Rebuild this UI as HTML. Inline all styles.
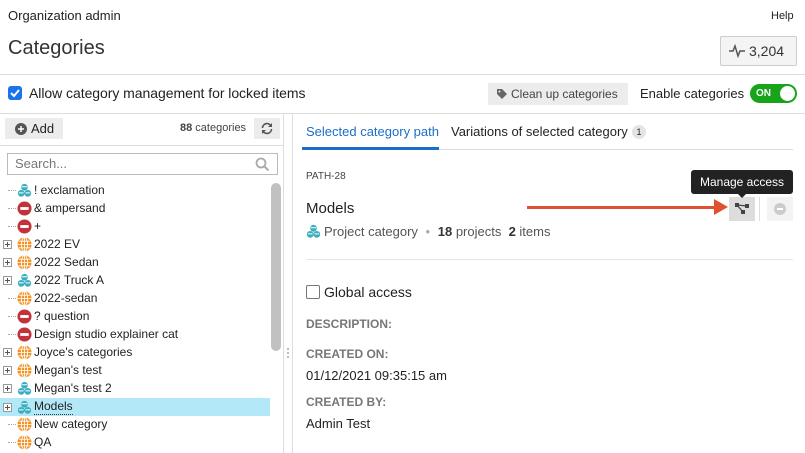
<!DOCTYPE html>
<html><head><meta charset="utf-8"><style>
*{box-sizing:border-box;margin:0;padding:0}
body{width:805px;height:453px;overflow:hidden;background:#fff;font-family:"Liberation Sans",Arial,sans-serif;color:#222;position:relative}
.a{position:absolute;white-space:nowrap}
.hr{position:absolute;height:1px;background:#ddd}
.row{position:absolute;left:0;height:18px;width:270px;font-size:12px;line-height:18px}
.row .t{position:absolute;left:34px;top:0}
.row svg{position:absolute;left:17px;top:2px}
.pl{position:absolute;left:3px;top:5px;width:9px;height:9px;border:1px solid #999;background:#fff}
.pl:before{content:"";position:absolute;left:1px;top:3px;width:5px;height:1px;background:#555}
.pl:after{content:"";position:absolute;left:3px;top:1px;width:1px;height:5px;background:#555}
.dot{position:absolute;left:8px;top:9px;width:8px;border-top:1px dotted #aaa}
.lbl{font-size:12px;font-weight:bold;color:#777}
</style></head><body>
<svg width="0" height="0" style="position:absolute"><defs>
<g id="cube"><circle cx="8" cy="4.5" r="3.6" fill="#3aaebd"/><circle cx="4.5" cy="11" r="3.6" fill="#3aaebd"/><circle cx="11.5" cy="11" r="3.6" fill="#3aaebd"/><path d="M5 4h6M2 10.5h5M9 10.5h5" stroke="#fff" stroke-width="1"/></g>
<g id="globe"><circle cx="8" cy="8" r="7.5" fill="#f39325"/><path d="M8 .5v15M.5 8h15M2 4.5h12M2 11.5h12" stroke="#fff" stroke-width=".9"/><ellipse cx="8" cy="8" rx="3.3" ry="7.5" fill="none" stroke="#fff" stroke-width=".9"/></g>
<g id="no"><circle cx="8" cy="8" r="7.5" fill="#c0333a"/><rect x="3.5" y="6.5" width="9" height="3" fill="#fff"/></g>
</defs></svg>

<div class="a" style="left:8px;top:8px;font-size:13px">Organization admin</div>
<div class="a" style="left:771px;top:10px;font-size:11px">Help</div>
<div class="a" style="left:8px;top:37px;font-size:20px;color:#333">Categories</div>
<div class="a" style="left:720px;top:36px;width:77px;height:30px;border:1px solid #ccc;border-radius:2px;background:#f4f4f4;font-size:14px;line-height:28px;padding-left:28px;color:#333">3,204</div>
<svg class="a" style="left:728px;top:44px" width="18" height="14"><path d="M1 7h4l2-5 3 10 2-5h5" fill="none" stroke="#555" stroke-width="1.5"/></svg>
<div class="hr" style="left:0;top:74px;width:805px"></div>

<div class="a" style="left:8px;top:86px;width:14px;height:14px;background:#1a73e8;border-radius:3px"></div>
<svg class="a" style="left:8px;top:86px" width="14" height="14"><path d="M3 7l3 3 5-6" fill="none" stroke="#fff" stroke-width="2"/></svg>
<div class="a" style="left:29px;top:85px;font-size:14px;letter-spacing:-0.05px">Allow category management for locked items</div>
<div class="a" style="left:488px;top:83px;width:140px;height:22px;background:#ececec;font-size:12px;line-height:22px;padding-left:23px;color:#444">Clean up categories</div>
<svg class="a" style="left:496px;top:88px" width="12" height="12"><path d="M1 1h5l5 5-5 5-5-5z" fill="#666"/><circle cx="3.5" cy="3.5" r="1" fill="#ececec"/></svg>
<div class="a" style="left:640px;top:86px;font-size:13px">Enable categories</div>
<div class="a" style="left:750px;top:84px;width:47px;height:19px;background:#17a31a;border-radius:10px;color:#fff;font-size:10px;font-weight:bold;line-height:19px;padding-left:6px">ON</div>
<div class="a" style="left:780px;top:86px;width:15px;height:15px;background:#fff;border-radius:50%"></div>
<div class="hr" style="left:0;top:113px;width:805px"></div>

<div class="a" style="left:5px;top:118px;width:58px;height:21px;background:#ececec;font-size:13px;line-height:21px;padding-left:26px">Add</div>
<svg class="a" style="left:15px;top:123px" width="12" height="12"><circle cx="6" cy="6" r="6" fill="#555"/><path d="M6 3v6M3 6h6" stroke="#fff" stroke-width="1.5"/></svg>
<div class="a" style="left:180px;top:122px;font-size:11px;color:#444"><b>88</b> categories</div>
<div class="a" style="left:254px;top:118px;width:26px;height:21px;background:#ececec"></div>
<svg class="a" style="left:260px;top:122px" width="14" height="13"><path d="M2.5 6A4.5 4.5 0 0 1 11 4M11.5 7A4.5 4.5 0 0 1 3 9" fill="none" stroke="#555" stroke-width="1.6"/><path d="M12 1v4h-4zM2 12V8h4z" fill="#555"/></svg>
<div class="hr" style="left:0;top:145px;width:283px"></div>
<div class="a" style="left:7px;top:153px;width:271px;height:22px;border:1px solid #bbb;font-size:13px;line-height:20px;padding-left:7px;color:#777">Search...</div>
<svg class="a" style="left:255px;top:157px" width="14" height="14"><circle cx="6" cy="6" r="4.5" fill="none" stroke="#aaa" stroke-width="1.8"/><path d="M9 9l4.5 4.5" stroke="#aaa" stroke-width="2"/></svg>
<div class="a" style="left:271px;top:183px;width:10px;height:168px;background:#c1c1c1;border-radius:5px"></div>
<div class="a" style="left:283px;top:113px;width:1px;height:340px;background:#ddd"></div>
<div class="a" style="left:292px;top:113px;width:1px;height:340px;background:#ddd"></div>
<div class="a" style="left:287px;top:348px;width:2px;height:10px;border-left:2px dotted #bbb"></div>

<div class="row" style="top:181px"><span class="dot"></span><svg width="15" height="15" viewBox="0 0 16 16"><use href="#cube"/></svg><span class="t">! exclamation</span></div>
<div class="row" style="top:199px"><span class="dot"></span><svg width="15" height="15" viewBox="0 0 16 16"><use href="#no"/></svg><span class="t">&amp; ampersand</span></div>
<div class="row" style="top:217px"><span class="dot"></span><svg width="15" height="15" viewBox="0 0 16 16"><use href="#no"/></svg><span class="t">+</span></div>
<div class="row" style="top:235px"><span class="pl"></span><svg width="15" height="15" viewBox="0 0 16 16"><use href="#globe"/></svg><span class="t">2022 EV</span></div>
<div class="row" style="top:253px"><span class="pl"></span><svg width="15" height="15" viewBox="0 0 16 16"><use href="#globe"/></svg><span class="t">2022 Sedan</span></div>
<div class="row" style="top:271px"><span class="pl"></span><svg width="15" height="15" viewBox="0 0 16 16"><use href="#cube"/></svg><span class="t">2022 Truck A</span></div>
<div class="row" style="top:289px"><span class="dot"></span><svg width="15" height="15" viewBox="0 0 16 16"><use href="#globe"/></svg><span class="t">2022-sedan</span></div>
<div class="row" style="top:307px"><span class="dot"></span><svg width="15" height="15" viewBox="0 0 16 16"><use href="#no"/></svg><span class="t">? question</span></div>
<div class="row" style="top:325px"><span class="dot"></span><svg width="15" height="15" viewBox="0 0 16 16"><use href="#no"/></svg><span class="t">Design studio explainer cat</span></div>
<div class="row" style="top:343px"><span class="pl"></span><svg width="15" height="15" viewBox="0 0 16 16"><use href="#globe"/></svg><span class="t">Joyce's categories</span></div>
<div class="row" style="top:361px"><span class="pl"></span><svg width="15" height="15" viewBox="0 0 16 16"><use href="#globe"/></svg><span class="t">Megan's test</span></div>
<div class="row" style="top:379px"><span class="pl"></span><svg width="15" height="15" viewBox="0 0 16 16"><use href="#cube"/></svg><span class="t">Megan's test 2</span></div>
<div class="row" style="top:398px;background:#b3e8f8"><span class="pl"></span><svg width="15" height="15" viewBox="0 0 16 16"><use href="#cube"/></svg><span class="t" style="border-bottom:1px dotted #333;line-height:15px;top:1px">Models</span></div>
<div class="row" style="top:415px"><span class="dot"></span><svg width="15" height="15" viewBox="0 0 16 16"><use href="#globe"/></svg><span class="t">New category</span></div>
<div class="row" style="top:433px"><span class="dot"></span><svg width="15" height="15" viewBox="0 0 16 16"><use href="#globe"/></svg><span class="t">QA</span></div>

<div class="a" style="left:306px;top:124px;font-size:13px;color:#1a6fc9">Selected category path</div>
<div class="a" style="left:451px;top:124px;font-size:13px">Variations of selected category</div>
<div class="a" style="left:632px;top:125px;width:14px;height:14px;border-radius:7px;background:#e4e4e4;font-size:9px;text-align:center;line-height:14px">1</div>
<div class="hr" style="left:302px;top:149px;width:491px"></div>
<div class="a" style="left:302px;top:147px;width:137px;height:3px;background:#1a6fc9"></div>
<div class="a" style="left:306px;top:171px;font-size:10px;color:#444">PATH-28</div>
<div class="a" style="left:729px;top:197px;width:26px;height:24px;background:#ddd"></div>
<svg class="a" style="left:735px;top:203px" width="14" height="12"><path d="M2 2l10 1M2 2l6 7" stroke="#444" stroke-width="1.3"/><rect x="0" y="0" width="4" height="4" fill="#444"/><rect x="10" y="1" width="4" height="4" fill="#444"/><rect x="6" y="7" width="4" height="4" fill="#444"/></svg>
<div class="a" style="left:691px;top:170px;width:102px;height:24px;background:#222;border-radius:3px;color:#fff;font-size:12px;line-height:24px;text-align:center">Manage access</div>
<div class="a" style="left:738px;top:194px;width:0;height:0;border-left:4px solid transparent;border-right:4px solid transparent;border-top:4px solid #222"></div>
<div class="a" style="left:306px;top:200px;font-size:15px">Models</div>
<div class="a" style="left:527px;top:206px;width:195px;height:3px;background:#e0522f"></div>
<div class="a" style="left:714px;top:199px;width:0;height:0;border-top:8px solid transparent;border-bottom:8px solid transparent;border-left:14px solid #e0522f"></div>
<div class="a" style="left:759px;top:197px;width:1px;height:24px;background:#ddd"></div>
<div class="a" style="left:767px;top:197px;width:26px;height:24px;background:#f3f3f3"></div>
<div class="a" style="left:774px;top:203px;width:12px;height:12px;border-radius:50%;background:#ccc"></div>
<div class="a" style="left:777px;top:208px;width:6px;height:2px;background:#fff"></div>
<svg class="a" style="left:306px;top:224px" width="15" height="15" viewBox="0 0 16 16"><use href="#cube"/></svg>
<div class="a" style="left:324px;top:224px;font-size:13px;color:#555">Project category <span style="color:#aaa;margin:0 4px">•</span> <b style="color:#333">18</b> projects &nbsp;<b style="color:#333">2</b> items</div>
<div class="hr" style="left:306px;top:259px;width:487px;background:#e6e6e6"></div>
<div class="a" style="left:306px;top:285px;width:14px;height:14px;border:1px solid #777;border-radius:2px"></div>
<div class="a" style="left:324px;top:284px;font-size:14px">Global access</div>
<div class="a lbl" style="left:306px;top:317px">DESCRIPTION:</div>
<div class="a lbl" style="left:306px;top:347px">CREATED ON:</div>
<div class="a" style="left:306px;top:368px;font-size:13px">01/12/2021 09:35:15 am</div>
<div class="a lbl" style="left:306px;top:395px">CREATED BY:</div>
<div class="a" style="left:306px;top:416px;font-size:13px">Admin Test</div>
</body></html>
